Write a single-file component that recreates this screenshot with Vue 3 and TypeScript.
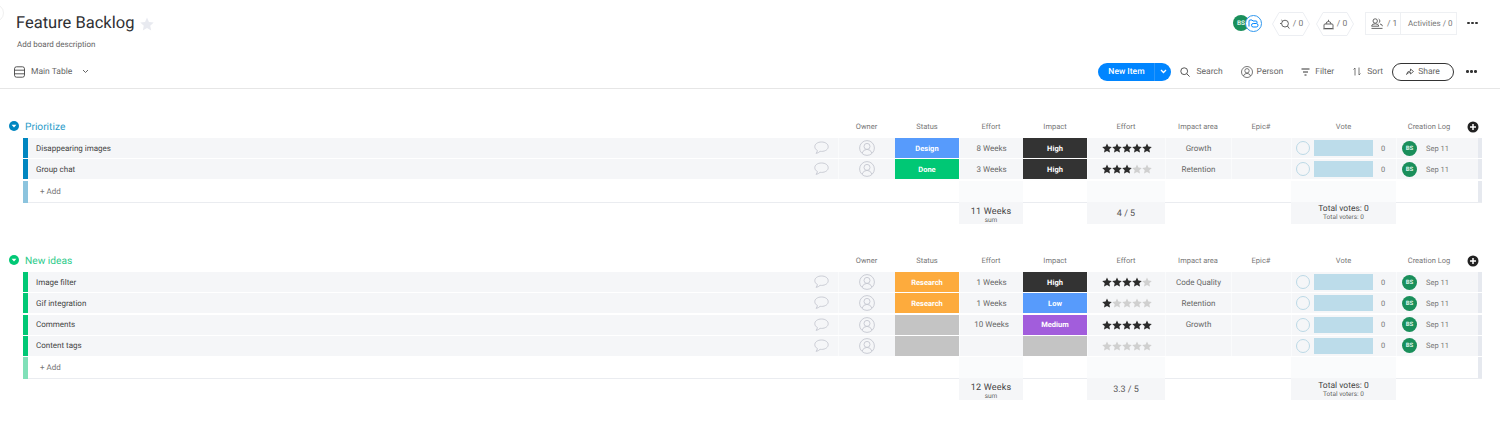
<script setup lang="ts">
interface Item {
  name: string
  status?: { label: string; color: string }
  effort: string
  impact?: { label: string; color: string }
  stars: number
  area: string
}
interface Group {
  name: string
  color: string
  text: string
  light: string
  items: Item[]
  sum: string
  rating: string
}
const gray = '#c4c4c4'
const groups: Group[] = [
  {
    name: 'Prioritize', color: '#0086c0', text: '#2a9bc9', light: '#8cc4de', sum: '11 Weeks', rating: '4 / 5',
    items: [
      { name: 'Disappearing images', status: { label: 'Design', color: '#579bfc' }, effort: '8 Weeks', impact: { label: 'High', color: '#333333' }, stars: 5, area: 'Growth' },
      { name: 'Group chat', status: { label: 'Done', color: '#00c875' }, effort: '3 Weeks', impact: { label: 'High', color: '#333333' }, stars: 3, area: 'Retention' },
    ],
  },
  {
    name: 'New ideas', color: '#00c875', text: '#2ecb8b', light: '#80e0b8', sum: '12 Weeks', rating: '3.3 / 5',
    items: [
      { name: 'Image filter', status: { label: 'Research', color: '#fdab3d' }, effort: '1 Weeks', impact: { label: 'High', color: '#333333' }, stars: 4, area: 'Code Quality' },
      { name: 'Gif integration', status: { label: 'Research', color: '#fdab3d' }, effort: '1 Weeks', impact: { label: 'Low', color: '#579bfc' }, stars: 1, area: 'Retention' },
      { name: 'Comments', effort: '10 Weeks', impact: { label: 'Medium', color: '#a25ddc' }, stars: 5, area: 'Growth' },
      { name: 'Content tags', effort: '', stars: 0, area: '' },
    ],
  },
]
const columns = ['Owner', 'Status', 'Effort', 'Impact', 'Effort', 'Impact area', 'Epic#', 'Vote', 'Creation Log']
const starPoints = '5,0.4 6.4,3.5 9.8,3.9 7.3,6.2 8,9.6 5,7.9 2,9.6 2.7,6.2 0.2,3.9 3.6,3.5'
</script>

<template>
  <div class="page">
    <span class="pane-edge"></span>
    <header class="top">
      <div class="top-left">
        <div class="title-line">
          <h1>Feature Backlog</h1>
          <svg class="fav" width="14" height="14" viewBox="0 0 10 10"><polygon :points="starPoints" fill="#e8eaf0" /></svg>
        </div>
        <p>Add board description</p>
      </div>
      <div class="top-right">
        <div class="avatars">
          <span class="av">BS</span>
          <span class="av-out">
            <svg width="11" height="9" viewBox="0 0 11 9" fill="none" stroke="#0085ff" stroke-width="1"><path d="M1 7.5V2q0-1 1-1h2l1 1h3q1 0 1 1v1" /><rect x="3.5" y="4.5" width="6.5" height="3.5" rx="1.7" fill="#fff" /></svg>
          </span>
        </div>
        <div class="hex">
          <svg class="hex-bg" width="38" height="24" viewBox="0 0 38 24"><path d="M7 .5H31L37.5 12 31 23.5H7L.5 12Z" fill="#fff" stroke="#eceef2" /></svg>
          <svg class="hex-ic" width="11" height="11" viewBox="0 0 11 11" fill="none" stroke="#555" stroke-width=".9"><circle cx="6" cy="4.6" r="3.4" /><path d="M8.4 7l2 2.6M2.4 1l1.4 1.4M1 4.5h1.4" /></svg>
          <span>/ 0</span>
        </div>
        <div class="hex">
          <svg class="hex-bg" width="38" height="24" viewBox="0 0 38 24"><path d="M7 .5H31L37.5 12 31 23.5H7L.5 12Z" fill="#fff" stroke="#eceef2" /></svg>
          <svg class="hex-ic" width="11" height="11" viewBox="0 0 11 11" fill="none" stroke="#555" stroke-width=".9"><rect x="1" y="5" width="9" height="4.5" rx="1" /><path d="M3 5q0-2.500 2.500-2.500T8 5M5.500 2.500V.8M.2 9.800h10.600" /></svg>
          <span>/ 0</span>
        </div>
        <div class="activity">
          <div class="act-users">
            <svg width="12" height="11" viewBox="0 0 12 11" fill="none" stroke="#555" stroke-width=".9"><circle cx="4.200" cy="3" r="2.200" /><path d="M.6 8.200q0-2.400 3.600-2.400t3.600 2.400zM7.600 1a2.200 2.200 0 0 1 0 4M9 6q2.400.3 2.400 2.200M.5 10.400h11" /></svg>
            <span>/ 1</span>
          </div>
          <div class="act-log">Activities / 0</div>
        </div>
        <div class="dots"><i></i><i></i><i></i></div>
      </div>
    </header>

    <nav class="toolbar">
      <div class="view">
        <svg width="11" height="12" viewBox="0 0 11 12" fill="none" stroke="#444" stroke-width=".9"><rect x=".5" y=".8" width="10" height="10.400" rx="2" /><path d="M.5 4.200h10M.5 7.800h10" /></svg>
        <span>Main Table</span>
        <svg width="7" height="5" viewBox="0 0 7 5" fill="none" stroke="#555" stroke-width=".9"><path d="M1 1l2.500 2.500L6 1" /></svg>
      </div>
      <div class="actions">
        <div class="new-item">
          <span class="ni-label">New Item</span>
          <span class="ni-arrow"><svg width="7" height="5" viewBox="0 0 7 5" fill="none" stroke="#fff" stroke-width="1.300"><path d="M1 1l2.500 2.500L6 1" /></svg></span>
        </div>
        <div class="act a-search">
          <svg width="10" height="10" viewBox="0 0 10 10" fill="none" stroke="#444" stroke-width=".9"><circle cx="4.200" cy="4.200" r="3.400" /><path d="M6.800 6.800L9.600 9.600" /></svg>
          <span>Search</span>
        </div>
        <div class="act a-person">
          <svg width="12" height="12" viewBox="0 0 12 12" fill="none" stroke="#555" stroke-width=".8"><circle cx="6" cy="6" r="5.500" /><circle cx="6" cy="4.800" r="2.200" /><path d="M2.400 10q.8-2.600 3.600-2.600T9.600 10" /></svg>
          <span>Person</span>
        </div>
        <div class="act a-filter">
          <svg width="9" height="8" viewBox="0 0 9 8" fill="none" stroke="#333" stroke-width="1"><path d="M.5 1h8M2 4h5M3.500 7h2" /></svg>
          <span>Filter</span>
        </div>
        <div class="act a-sort">
          <svg width="8" height="9" viewBox="0 0 8 9" fill="none" stroke="#555" stroke-width=".8"><path d="M2 8.500V1M.5 2.500L2 1M6 .5V8M7.500 6.500L6 8" /></svg>
          <span>Sort</span>
        </div>
        <div class="share">
          <svg width="8" height="7" viewBox="0 0 8 7" fill="none" stroke="#444" stroke-width=".8"><path d="M.5 6.500Q1 3 4.500 3V1L7.500 3.500 4.500 6V4.400Q2 4.400.5 6.500Z" /></svg>
          <span>Share</span>
        </div>
        <div class="dots"><i></i><i></i><i></i></div>
      </div>
    </nav>

    <main class="board">
      <section v-for="group in groups" :key="group.name" class="group">
        <div class="grid head">
          <svg class="caret" width="10" height="10" viewBox="0 0 10 10"><circle cx="5" cy="5" r="5" :fill="group.color" /><path d="M2.600 3.800h4.800L5 6.600Z" fill="#fff" /></svg>
          <span class="gname" :style="{ color: group.text }">{{ group.name }}</span>
          <span v-for="(c, i) in columns" :key="i" class="col">{{ c }}</span>
          <svg class="plus" width="12" height="12" viewBox="0 0 12 12"><circle cx="6" cy="6" r="5.500" fill="#222" /><path d="M6 3v6M3 6h6" stroke="#fff" stroke-width="1.500" /></svg>
        </div>

        <div v-for="item in group.items" :key="item.name" class="grid row">
          <span class="gutter"></span>
          <span class="bar" :style="{ background: group.color }"></span>
          <span class="cell name">{{ item.name }}</span>
          <span class="cell comment">
            <svg width="15" height="14" viewBox="0 0 15 14" fill="none" stroke="#c5c7d0" stroke-width=".9"><path d="M7.500 1C3.600 1 .8 3 .8 5.700c0 1.600 1 3 2.600 3.800-.1 1-.6 2-1.300 2.900 1.600-.3 3-1 4-2.100.5 0 .9.1 1.400.1 3.900 0 6.700-2 6.700-4.700S11.400 1 7.500 1Z" /></svg>
          </span>
          <span class="cell center">
            <svg width="16" height="16" viewBox="0 0 16 16" fill="none" stroke="#c5c7d0" stroke-width=".9"><circle cx="8" cy="8" r="7.400" /><circle cx="8" cy="6.400" r="3" /><path d="M3.200 13q1-3.600 4.800-3.600t4.800 3.600" /></svg>
          </span>
          <span class="cell label" :style="{ background: item.status ? item.status.color : gray }">{{ item.status?.label }}</span>
          <span class="cell val">{{ item.effort }}</span>
          <span class="cell label" :style="{ background: item.impact ? item.impact.color : gray }">{{ item.impact?.label }}</span>
          <span class="cell stars">
            <svg v-for="n in 5" :key="n" width="10" height="10" viewBox="0 0 10 10"><polygon :points="starPoints" :fill="n <= item.stars ? '#2b2b2b' : '#d0d0d0'" /></svg>
          </span>
          <span class="cell val">{{ item.area }}</span>
          <span class="cell"></span>
          <span class="cell vote">
            <i class="vote-dot"></i>
            <i class="vote-bar"></i>
            <span class="vote-n">0</span>
          </span>
          <span class="cell log">
            <span class="av small">BS</span>
            <span>Sep 11</span>
          </span>
          <span class="cell end"></span>
        </div>

        <div class="grid add">
          <span class="gutter"></span>
          <span class="bar" :style="{ background: group.light }"></span>
          <span class="add-label">+ Add</span>
          <span></span><span></span><span></span>
          <span class="tint"></span>
          <span></span>
          <span class="tint"></span>
          <span></span><span></span>
          <span class="tint"></span>
          <span></span>
          <span class="add-end"></span>
        </div>

        <div class="grid sum">
          <span class="slot-effort"><b>{{ group.sum }}</b><small>sum</small></span>
          <span class="slot-rating">{{ group.rating }}</span>
          <span class="slot-vote"><b>Total votes: 0</b><small>Total voters: 0</small></span>
        </div>
      </section>
    </main>
  </div>
</template>

<style scoped>
.page {
  position: relative;
  width: 1500px;
  height: 434px;
  overflow: hidden;
  background: #fff;
  color: #444;
  font-family: Roboto, "Liberation Sans", sans-serif;
  text-rendering: geometricPrecision;
}
.pane-edge {
  position: absolute;
  left: -14px;
  top: 4px;
  width: 16px;
  height: 16px;
  border: 1px solid #f0f0f0;
  border-radius: 50%;
}
.top {
  display: flex;
  justify-content: space-between;
  height: 56px;
  padding: 12px 22px 0 16px;
  box-sizing: border-box;
}
.title-line {
  display: flex;
  align-items: center;
  gap: 6px;
  height: 22px;
}
h1 {
  margin: 0;
  font-size: 16.5px;
  font-weight: 400;
  color: #2f3033;
}
.fav { margin-top: 1px; }
.top-left p {
  margin: 5px 0 0 1px;
  font-size: 8px;
  line-height: 12px;
  color: #666;
}
.top-right {
  display: flex;
  align-items: flex-start;
  height: 24px;
  font-size: 8.5px;
  color: #777;
}
.avatars {
  display: flex;
  margin-top: 3px;
  margin-right: 10px;
}
.av {
  display: flex;
  align-items: center;
  justify-content: center;
  width: 16px;
  height: 16px;
  border-radius: 50%;
  background: #1a8f5b;
  color: #dff3e8;
  font-size: 6.5px;
  font-weight: 700;
}
.av-out {
  display: flex;
  align-items: center;
  justify-content: center;
  width: 15px;
  height: 15px;
  margin-left: -4px;
  border: 1px solid #2f97ee;
  border-radius: 50%;
  background: #fff;
}
.hex {
  position: relative;
  display: flex;
  align-items: center;
  justify-content: center;
  gap: 3px;
  width: 38px;
  height: 24px;
  margin-right: 6px;
}
.hex-bg { position: absolute; left: 0; top: 0; }
.hex-ic, .hex span { position: relative; }
.activity {
  display: flex;
  align-items: center;
  width: 92px;
  height: 23px;
  margin-left: 5px;
  margin-right: 10px;
  border: 1px solid #eef0f3;
  box-sizing: border-box;
}
.act-users {
  display: flex;
  align-items: center;
  gap: 4px;
  width: 35px;
  height: 100%;
  padding-left: 5px;
  box-sizing: border-box;
  border-right: 1px solid #eef0f3;
}
.act-log {
  padding-left: 7px;
  font-size: 8px;
  white-space: nowrap;
}
.dots {
  display: flex;
  align-items: center;
  gap: 1.5px;
  height: 22px;
  width: 11px;
}
.dots i {
  width: 2.5px;
  height: 2.5px;
  border-radius: 50%;
  background: #333;
}
.toolbar {
  display: flex;
  justify-content: space-between;
  align-items: center;
  height: 33px;
  padding: 0 23px 0 14px;
  border-bottom: 1px solid #e6e6e6;
  box-sizing: border-box;
  font-size: 8.5px;
  color: #666;
}
.view {
  display: flex;
  align-items: center;
  gap: 6px;
  margin-top: -1px;
}
.view svg:last-child { margin-left: 4px; }
.actions {
  display: flex;
  align-items: center;
  margin-top: -1px;
}
.new-item {
  display: flex;
  width: 73px;
  height: 18px;
  border-radius: 9px;
  background: #0085ff;
  color: #fff;
  font-weight: 500;
  font-size: 8.5px;
  line-height: 18px;
}
.ni-label {
  width: 56px;
  text-align: center;
  border-right: 1px solid #2a97fb;
}
.ni-arrow {
  flex: 1;
  display: flex;
  align-items: center;
  justify-content: center;
}
.act {
  display: flex;
  align-items: center;
  gap: 3px;
}
.a-search { margin-left: 9px; gap: 6px; }
.a-person { margin-left: 18px; gap: 4px; }
.a-filter { margin-left: 18px; gap: 5px; }
.a-sort { margin-left: 19px; gap: 6px; }
.share {
  display: flex;
  align-items: center;
  justify-content: center;
  gap: 4px;
  width: 62px;
  height: 18px;
  margin-left: 9px;
  margin-right: 12px;
  border: 1px solid #333;
  border-radius: 9px;
  box-sizing: border-box;
}
.board { padding: 27px 0 0 9px; }
.group { margin-bottom: 26.5px; }
.grid {
  display: grid;
  grid-template-columns: 14px 5px 784px 26px 57px 64px 64px 64px 78px 66px 60px 105px 66px 20px;
  align-items: stretch;
  width: 1473px;
}
.head {
  height: 22px;
  padding-bottom: 2px;
  box-sizing: border-box;
  align-items: center;
}
.gname {
  grid-column: 2 / 5;
  padding-left: 2px;
  margin-top: 2px;
  font-size: 10.2px;
  white-space: nowrap;
}
.caret { grid-column: 1; }
.col {
  font-size: 7.5px;
  text-align: center;
  color: #777;
}
.plus {
  justify-self: center;
  margin-top: 2px;
  margin-left: 2px;
}
.row {
  height: 20px;
  margin-bottom: 1.3px;
}
.bar { display: block; }
.cell {
  display: flex;
  align-items: center;
  justify-content: center;
  min-width: 0;
  background: #f5f6f8;
  font-size: 8px;
  color: #555;
  border-left: 1px solid #fafbfc;
  box-sizing: border-box;
}
.name {
  justify-content: flex-start;
  padding-left: 8px;
  border-left: 0;
  color: #444;
}
.comment {
  justify-content: flex-start;
  padding-left: 2px;
  border-left: 0;
}
.label {
  border-left: 0;
  color: #fff;
  font-weight: 700;
  font-size: 7.5px;
}
.val { font-size: 8px; color: #666; }
.stars svg { display: block; }
.vote {
  justify-content: flex-start;
  padding-left: 4px;
}
.vote-dot {
  width: 14px;
  height: 14px;
  border: 1px solid #bcd9e6;
  border-radius: 50%;
  box-sizing: border-box;
  flex: none;
}
.vote-bar {
  width: 59px;
  height: 16px;
  margin-left: 4px;
  background: #bcdcea;
  flex: none;
}
.vote-n { margin-left: 8px; font-size: 7.5px; color: #777; }
.log {
  justify-content: flex-start;
  gap: 9px;
  padding-left: 5px;
  font-size: 7.5px;
  color: #777;
}
.av.small {
  width: 15px;
  height: 15px;
  font-size: 6px;
  flex: none;
}
.end {
  border-left: 0;
  background: linear-gradient(to right, #f5f6f8 16px, #e6e9ef 16px);
}
.add { height: 21px; }
.add > :nth-child(n+3) { border-bottom: 1px solid #eaecf0; }
.add-label {
  padding-left: 12px;
  font-size: 8px;
  line-height: 21px;
  color: #777;
}
.tint { background: #fafbfc; }
.add-end { background: linear-gradient(to right, #fff 16px, #e6e9ef 16px); }
.sum { height: 22px; }
.sum > span {
  display: flex;
  flex-direction: column;
  align-items: center;
  justify-content: center;
  background: #f5f6f8;
  color: #555;
  font-size: 9px;
  line-height: 10px;
}
.sum b { font-weight: 400; font-size: 9px; letter-spacing: .2px; color: #444; }
.sum small { font-size: 6.5px; line-height: 7px; color: #666; }
.slot-effort { grid-column: 7; padding-top: 5px; }
.slot-rating { grid-column: 9; padding-top: 2px; }
.slot-vote { grid-column: 12; }
.slot-vote b { font-size: 8.5px; letter-spacing: 0; }
</style>
